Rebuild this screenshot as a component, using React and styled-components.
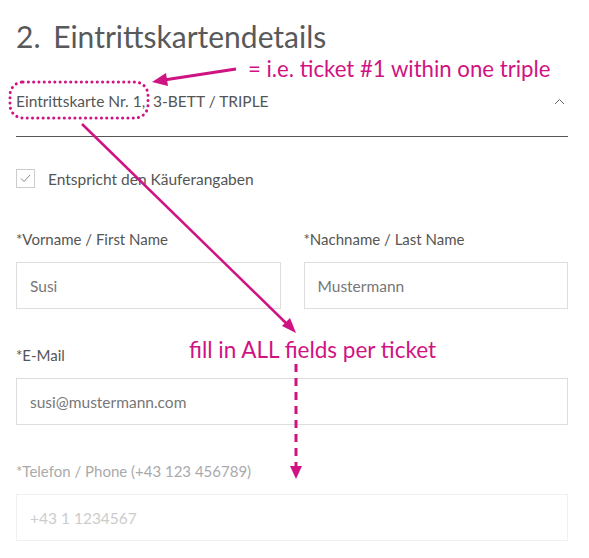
import React from 'react';
import styled, { createGlobalStyle } from 'styled-components';

const GlobalStyle = createGlobalStyle`
  body {
    margin: 0;
    background: #fff;
    font-family: Lato, "Open Sans", sans-serif;
  }
`;

const Page = styled.div`
  position: relative;
  width: 589px;
  height: 558px;
  overflow: hidden;
  padding: 0 21px 0 16px;
  box-sizing: border-box;
`;

const Title = styled.h2`
  margin: 0;
  padding-top: 17px;
  height: 38px;
  line-height: 38px;
  font-size: 30px;
  font-weight: 400;
  color: #58595b;
  word-spacing: 5px;
`;

const AccordionHead = styled.div`
  display: flex;
  align-items: center;
  justify-content: space-between;
  margin-top: 35px;
  height: 22px;
  padding-bottom: 24px;
  border-bottom: 1px solid #555;
  font-size: 15.5px;
  color: #555;
`;

const Chevron = styled.svg`
  width: 11px;
  height: 7px;
  margin-right: 3px;
`;

const CheckRow = styled.label`
  display: flex;
  align-items: center;
  gap: 13px;
  margin-top: 32px;
  font-size: 15.5px;
  color: #555;
`;

const Box = styled.span`
  width: 17px;
  height: 17px;
  border: 1px solid #ccc;
  display: flex;
  align-items: center;
  justify-content: center;
`;

const Grid = styled.div`
  display: grid;
  grid-template-columns: ${(p) => p.$cols || '1fr'};
  column-gap: 23px;
`;

const Field = styled.div`
  margin-top: ${(p) => p.$top || '36px'};
`;

const Label = styled.div`
  height: 20px;
  line-height: 20px;
  font-size: 15px;
  color: ${(p) => (p.$dim ? '#aaa' : '#555')};
  margin-bottom: 13px;
`;

const Input = styled.div`
  height: 47px;
  box-sizing: border-box;
  border: 1px solid ${(p) => (p.$dim ? '#f0f0f0' : '#ddd')};
  padding: 0 13px;
  display: flex;
  align-items: center;
  font-size: 15.5px;
  color: ${(p) => (p.$dim ? '#ccc' : '#777')};
`;

const Note = styled.span`
  position: absolute;
  left: ${(p) => p.$x}px;
  top: ${(p) => p.$y}px;
  font-size: ${(p) => p.$size}px;
  line-height: 24px;
  color: #cf1383;
  white-space: nowrap;
`;

const Overlay = styled.svg`
  position: absolute;
  left: 0;
  top: 0;
  width: 589px;
  height: 558px;
  pointer-events: none;
`;

const pink = '#cf1383';

export default function App() {
  return (
    <Page>
      <GlobalStyle />
      <Title>2. Eintrittskartendetails</Title>
      <AccordionHead>
        <span>Eintrittskarte Nr. 1,&nbsp;&nbsp;3-BETT / TRIPLE</span>
        <Chevron viewBox="0 0 11 7">
          <path d="M1 6 L5.5 1.5 L10 6" fill="none" stroke="#666" strokeWidth="1" />
        </Chevron>
      </AccordionHead>
      <CheckRow>
        <Box>
          <svg width="11" height="9" viewBox="0 0 11 9">
            <path d="M1 4.5 L4 7.5 L10 1" fill="none" stroke="#888" strokeWidth="1" />
          </svg>
        </Box>
        Entspricht den Käuferangaben
      </CheckRow>
      <Grid $cols="1fr 1fr">
        <Field $top="41px">
          <Label>*Vorname / First Name</Label>
          <Input>Susi</Input>
        </Field>
        <Field $top="41px">
          <Label>*Nachname / Last Name</Label>
          <Input>Mustermann</Input>
        </Field>
      </Grid>
      <Field>
        <Label>*E-Mail</Label>
        <Input>susi@mustermann.com</Input>
      </Field>
      <Field $top="36px">
        <Label $dim>*Telefon / Phone (+43 123 456789)</Label>
        <Input $dim>+43 1 1234567</Input>
      </Field>

      <Overlay viewBox="0 0 589 558">
        <rect x="10" y="82" width="138" height="36" rx="13" fill="none" stroke={pink}
          strokeWidth="3" strokeDasharray="0.1 5.2" strokeLinecap="round" />
        <line x1="236" y1="69" x2="164" y2="80" stroke={pink} strokeWidth="3" />
        <polygon points="152,82 166,73 168,86" fill={pink} />
        <line x1="82" y1="124" x2="288" y2="325" stroke={pink} strokeWidth="2.5" />
        <polygon points="296,333 282,326 290,318" fill={pink} />
        <line x1="296" y1="364" x2="296" y2="468" stroke={pink} strokeWidth="3" strokeDasharray="8 6" />
        <polygon points="290,466 302,466 296,479" fill={pink} />
      </Overlay>
      <Note $x={248} $y={57} $size={22.2}>= i.e. ticket #1 within one triple</Note>
      <Note $x={189} $y={338} $size={22.5}>fill in ALL fields per ticket</Note>
    </Page>
  );
}
